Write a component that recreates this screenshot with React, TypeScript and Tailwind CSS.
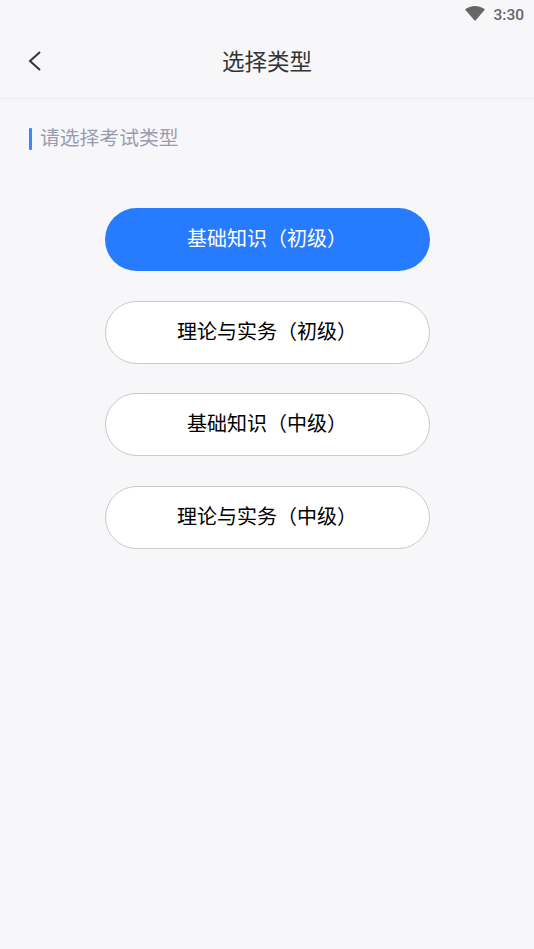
const FONT = '"Roboto", "Noto Sans CJK SC", sans-serif'

const OPTIONS = [
  { label: "基础知识（初级）", active: true },
  { label: "理论与实务（初级）", active: false },
  { label: "基础知识（中级）", active: false },
  { label: "理论与实务（中级）", active: false },
]

export default function App() {
  return (
    <div className="min-h-[949px] bg-[#f7f7f9]" style={{ fontFamily: FONT }}>
      {/* 状态栏 */}
      <div className="flex h-[28px] items-center justify-end gap-[8px] pr-[10px]">
        <svg className="-mt-[2px]" width="20" height="15" viewBox="0 0 20 15">
          <path d="M0 3.500C2.800 1.200 6.200 0 10 0s7.200 1.200 10 3.500L10 15z" fill="#666666" />
        </svg>
        <span className="pt-[3px] text-[15.5px] font-medium text-[#666666]">3:30</span>
      </div>

      {/* 标题栏 */}
      <div className="relative flex h-[71px] items-center justify-center border-b border-[#ececef]">
        <button className="absolute left-[26px] top-[21px]">
          <svg width="18" height="24" viewBox="0 0 18 24" fill="none" stroke="#333333" strokeWidth="2">
            <path d="M14 3 L4 12 L14 21" />
          </svg>
        </button>
        <span className="text-[22.5px] text-[#333333]">选择类型</span>
      </div>

      <div className="mt-[28px] flex items-center pl-[29px]">
        <div className="h-[22px] w-[3px] rounded-[1px] bg-[#3b87ff]" />
        <span className="ml-[8px] text-[19.800px] leading-[24px] text-[#9a9ab0]">请选择考试类型</span>
      </div>

      <div className="mt-[57px] flex flex-col items-center gap-[29.670px]">
        {OPTIONS.map((o) => (
          <button
            key={o.label}
            className={`flex h-[63px] w-[325px] items-center justify-center rounded-full pb-[1px] text-[20px] ${
              o.active ? "bg-[#267bff] text-white" : "border border-[#c9c9c9] bg-white text-black"
            }`}
          >
            {o.label}
          </button>
        ))}
      </div>
    </div>
  )
}
